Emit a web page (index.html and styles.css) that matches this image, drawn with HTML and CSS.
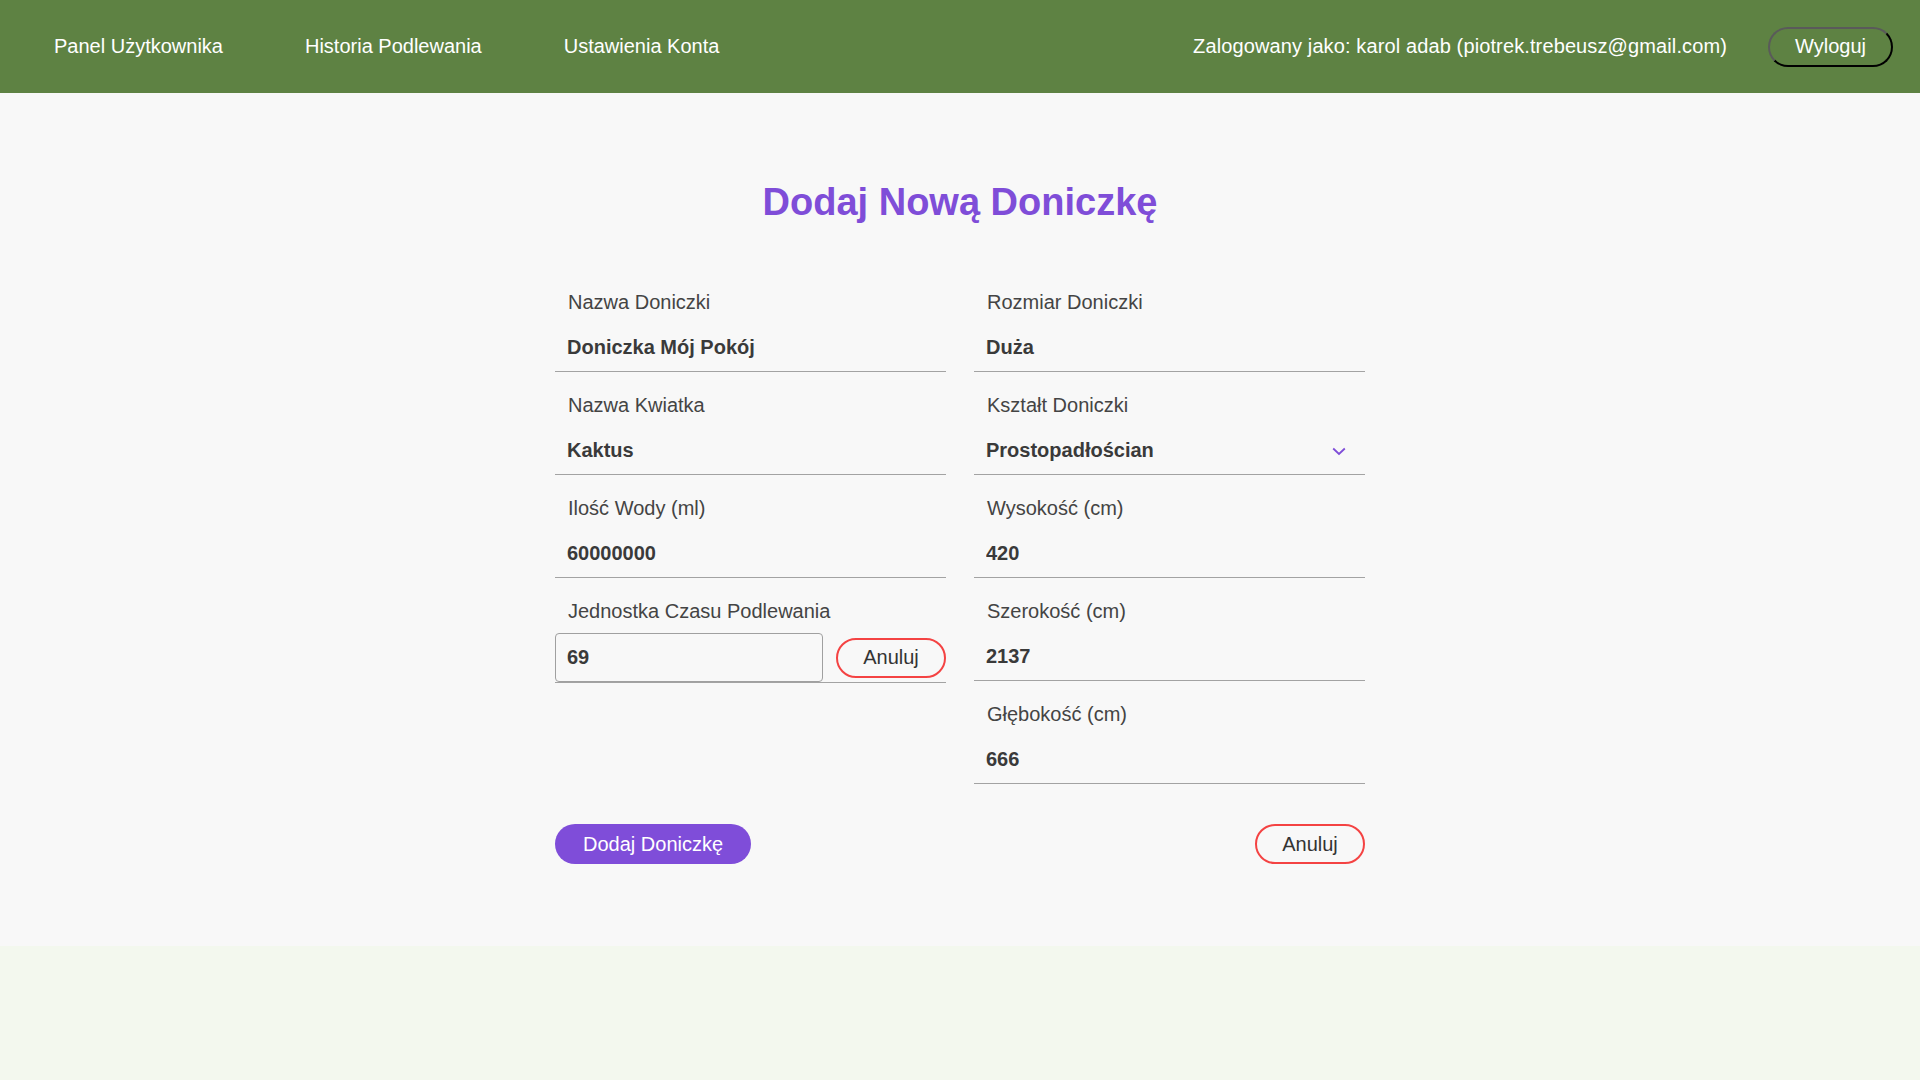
FILE: index.html
```html
<!DOCTYPE html>
<html lang="pl">
<head>
<meta charset="utf-8">
<title>Dodaj Nową Doniczkę</title>
<link rel="stylesheet" href="styles.css">
</head>
<body>
<header class="topbar">
  <nav class="nav">
    <a class="nav-link" href="#">Panel Użytkownika</a>
    <a class="nav-link" href="#">Historia Podlewania</a>
    <a class="nav-link" href="#">Ustawienia Konta</a>
  </nav>
  <div class="user">
    <span class="user-info">Zalogowany jako: karol adab (piotrek.trebeusz@gmail.com)</span>
    <button class="logout" type="button">Wyloguj</button>
  </div>
</header>
<main class="main">
  <h1 class="title">Dodaj Nową Doniczkę</h1>
  <form class="form">
    <div class="grid">
      <div class="col">
        <div class="field">
          <label class="label">Nazwa Doniczki</label>
          <input class="input" type="text" value="Doniczka Mój Pokój">
        </div>
        <div class="field">
          <label class="label">Nazwa Kwiatka</label>
          <input class="input" type="text" value="Kaktus">
        </div>
        <div class="field">
          <label class="label">Ilość Wody (ml)</label>
          <input class="input" type="text" value="60000000">
        </div>
        <div class="field">
          <label class="label">Jednostka Czasu Podlewania</label>
          <div class="inline-row">
            <input class="input-boxed" type="text" value="69">
            <button class="cancel-small" type="button">Anuluj</button>
          </div>
        </div>
      </div>
      <div class="col">
        <div class="field">
          <label class="label">Rozmiar Doniczki</label>
          <input class="input" type="text" value="Duża">
        </div>
        <div class="field">
          <label class="label">Kształt Doniczki</label>
          <div class="select-wrap">
            <select class="input select">
              <option>Prostopadłościan</option>
            </select>
            <svg class="chevron" width="14" height="9" viewBox="0 0 14 9"><path d="M1.2 1.5 L7 7 L12.8 1.5" fill="none" stroke="#7f4dd8" stroke-width="1.8"/></svg>
          </div>
        </div>
        <div class="field">
          <label class="label">Wysokość (cm)</label>
          <input class="input" type="text" value="420">
        </div>
        <div class="field">
          <label class="label">Szerokość (cm)</label>
          <input class="input" type="text" value="2137">
        </div>
        <div class="field">
          <label class="label">Głębokość (cm)</label>
          <input class="input" type="text" value="666">
        </div>
      </div>
    </div>
    <div class="actions">
      <button class="btn-primary" type="button">Dodaj Doniczkę</button>
      <button class="btn-cancel" type="button">Anuluj</button>
    </div>
  </form>
</main>
</body>
</html>
```
FILE: styles.css
```css
html, body {
  margin: 0;
  padding: 0;
}

body {
  background: #f3f8ee;
  min-height: 100vh;
  font-family: "Liberation Sans", Arial, sans-serif;
  font-size: 20px;
  color: #333;
}

.topbar {
  height: 93px;
  box-sizing: border-box;
  padding: 0 27px;
  background: #5e8243;
  display: flex;
  align-items: center;
  justify-content: space-between;
}

.nav {
  display: flex;
  gap: 28px;
}

.nav-link {
  padding: 0 27px;
  color: #fff;
  text-decoration: none;
  font-size: 20px;
  line-height: 23px;
}

.user {
  display: flex;
  align-items: center;
  gap: 41px;
}

.user-info {
  color: #fff;
  font-size: 20px;
  line-height: 23px;
  letter-spacing: 0.12px;
}

.logout {
  height: 40px;
  padding: 0 25px;
  border: 2px solid;
  border-color: #5a5a5a #000 #000 #5a5a5a;
  border-radius: 20px;
  background: transparent;
  color: #fff;
  font: 20px "Liberation Sans", Arial, sans-serif;
  cursor: pointer;
}

.main {
  background: #f8f8f8;
  padding: 89px 0 82px;
}

.title {
  margin: 0 0 68px;
  text-align: center;
  font-size: 38px;
  line-height: 41px;
  font-weight: bold;
  color: #7f4dd8;
}

.form {
  width: 810px;
  margin: 0 auto;
}

.grid {
  display: grid;
  grid-template-columns: 1fr 1fr;
  column-gap: 28px;
  align-items: start;
}

.col {
  display: flex;
  flex-direction: column;
  gap: 22px;
}

.field {
  display: flex;
  flex-direction: column;
  gap: 10px;
}

.label {
  padding-left: 13px;
  font-size: 20px;
  line-height: 23px;
  color: #444;
}

.input {
  display: block;
  width: 100%;
  height: 48px;
  box-sizing: border-box;
  margin: 0;
  padding: 12px;
  border: 0;
  border-bottom: 1px solid #a3a3a3;
  border-radius: 0;
  background: transparent;
  color: #3a3a3a;
  font: bold 20px/23px "Liberation Sans", Arial, sans-serif;
  outline: none;
}

.select-wrap {
  position: relative;
}

.select {
  appearance: none;
  -webkit-appearance: none;
}

.chevron {
  position: absolute;
  right: 19px;
  top: 20px;
}

.inline-row {
  display: flex;
  align-items: center;
  gap: 13px;
  border-bottom: 1px solid #a3a3a3;
}

.input-boxed {
  width: 268px;
  height: 49px;
  box-sizing: border-box;
  margin: 0;
  padding: 0 11px;
  border: 1px solid #a0a0a0;
  border-radius: 4px;
  background: transparent;
  color: #3a3a3a;
  font: bold 20px/23px "Liberation Sans", Arial, sans-serif;
  outline: none;
}

.cancel-small,
.btn-cancel {
  width: 110px;
  height: 40px;
  box-sizing: border-box;
  padding: 0;
  border: 2px solid #f44343;
  border-radius: 20px;
  background: transparent;
  color: #333;
  font: 20px "Liberation Sans", Arial, sans-serif;
  cursor: pointer;
}

.actions {
  display: flex;
  justify-content: space-between;
  align-items: center;
  margin-top: 40px;
}

.btn-primary {
  height: 40px;
  box-sizing: border-box;
  padding: 0 28px;
  border: 0;
  border-radius: 20px;
  background: #7f4dd9;
  color: #fff;
  font: 20px "Liberation Sans", Arial, sans-serif;
  cursor: pointer;
}
```
